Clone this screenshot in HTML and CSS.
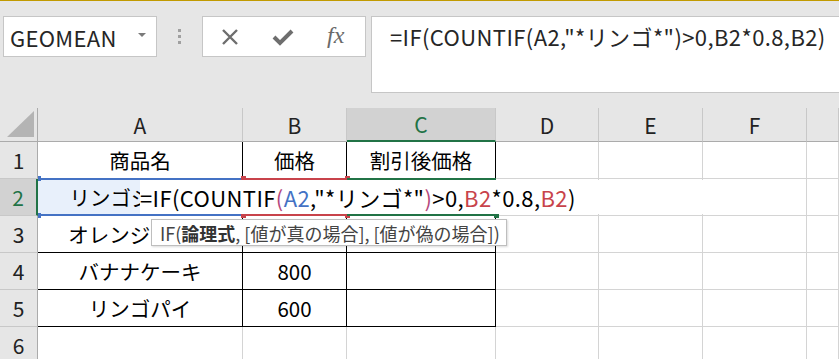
FILE: index.html
```html
<!DOCTYPE html>
<html>
<head>
    <title>Excel - GEOMEAN</title>
    <link rel="stylesheet" href="styles.css">
</head>
<body>
    <div class="topbar">
        <div class="namebox">
            <span>GEOMEAN</span>
            <span class="caret"></span>
        </div>
        <div class="dots"><i></i><i></i><i></i></div>
        <div class="fxbtns">
            <svg class="ico" width="18" height="18" viewBox="0 0 18 18">
                <path d="M2 2 L16 16 M16 2 L2 16" stroke="#6e6e6e" stroke-width="2.4" fill="none"/>
            </svg>
            <svg class="ico" width="22" height="18" viewBox="0 0 22 18">
                <path d="M2 9 L8 15 L20 3" stroke="#6e6e6e" stroke-width="4" fill="none"/>
            </svg>
            <span class="fx">fx</span>
        </div>
        <div class="formula">=IF(COUNTIF(A2,"*リンゴ*")&gt;0,B2*0.8,B2)</div>
    </div>

    <div class="sheet">
        <div class="hd corner"><span class="tri"></span></div>
        <div class="hd">A</div>
        <div class="hd">B</div>
        <div class="hd sel">C</div>
        <div class="hd">D</div>
        <div class="hd">E</div>
        <div class="hd">F</div>
        <div class="hd"></div>

        <div class="rh">1</div>
        <div class="c b">商品名</div>
        <div class="c b">価格</div>
        <div class="c b">割引後価格</div>
        <div class="c"></div><div class="c"></div><div class="c"></div><div class="c"></div>

        <div class="rh sel">2</div>
        <div class="c b a2">リンゴジュース</div>
        <div class="c b">1000</div>
        <div class="c b"></div>
        <div class="c"></div><div class="c"></div><div class="c"></div><div class="c"></div>

        <div class="rh">3</div>
        <div class="c b">オレンジケーキ</div>
        <div class="c b">1200</div>
        <div class="c b"></div>
        <div class="c"></div><div class="c"></div><div class="c"></div><div class="c"></div>

        <div class="rh">4</div>
        <div class="c b">バナナケーキ</div>
        <div class="c b">800</div>
        <div class="c b"></div>
        <div class="c"></div><div class="c"></div><div class="c"></div><div class="c"></div>

        <div class="rh">5</div>
        <div class="c b">リンゴパイ</div>
        <div class="c b">600</div>
        <div class="c b"></div>
        <div class="c"></div><div class="c"></div><div class="c"></div><div class="c"></div>

        <div class="rh">6</div>
        <div class="c"></div><div class="c"></div><div class="c"></div>
        <div class="c"></div><div class="c"></div><div class="c"></div><div class="c"></div>

        <!-- reference ranges while editing C2 -->
        <div class="rng rng-a"><i class="h tl"></i><i class="h bl"></i></div>
        <div class="rng rng-b"><i class="h tl"></i><i class="h bl"></i><i class="h tr"></i><i class="h br"></i></div>
        <div class="rng rng-c"><i class="h br"></i></div>

        <div class="editor">=IF(COUNTIF<span class="pr">(</span><span class="ra">A2</span>,"*リンゴ*"<span class="pr">)</span>&gt;0,<span class="rb">B2</span>*0.8,<span class="rb">B2</span>)</div>

        <div class="tip">IF(<b>論理式</b>, [値が真の場合], [値が偽の場合])</div>
    </div>
</body>
</html>
```

FILE: styles.css
```css
body {
    margin: 0;
    font-family: "Noto Sans CJK JP", "Noto Sans", sans-serif;
    color: #000;
    background: #fff;
    overflow: hidden;
}

.topbar {
    height: 108px;
    box-sizing: border-box;
    border-top: 1px solid #c19a00;
    background: #e6e6e6;
    padding: 15px 0 0 3px;
    display: flex;
    align-items: flex-start;
}
.namebox {
    width: 154px;
    height: 41px;
    box-sizing: border-box;
    background: #fff;
    border: 1px solid #c6c6c6;
    display: flex;
    align-items: center;
    justify-content: space-between;
    padding: 0 10px 0 6px;
    font-size: 22px;
    letter-spacing: 0.3px;
    color: #262626;
}
.caret {
    width: 0;
    height: 0;
    border-left: 4px solid transparent;
    border-right: 4px solid transparent;
    border-top: 4px solid #7a7a7a;
    margin-bottom: 4px;
}
.dots {
    width: 45px;
    display: flex;
    flex-direction: column;
    align-items: center;
    gap: 3px;
    padding-top: 13px;
}
.dots i {
    width: 3px;
    height: 3px;
    background: #a0a0a0;
}
.fxbtns {
    width: 164px;
    height: 41px;
    box-sizing: border-box;
    background: #fff;
    border: 1px solid #c6c6c6;
    display: flex;
    align-items: center;
    gap: 33px;
    padding-left: 18px;
}
.fx {
    font-family: "Liberation Serif", serif;
    font-style: italic;
    font-size: 24px;
    color: #6a6a6a;
    margin-top: -3px;
}
.formula {
    flex: 1;
    margin-left: 5px;
    height: 77px;
    box-sizing: border-box;
    background: #fff;
    border: 1px solid #c6c6c6;
    border-right: none;
    padding: 3px 0 0 18px;
    font-size: 22px;
    letter-spacing: 0.4px;
    color: #262626;
    white-space: nowrap;
}

.sheet {
    position: relative;
    display: grid;
    grid-template-columns: 38px 205px 104px 149px 103px 104px 104px 1fr;
    grid-template-rows: 34px repeat(6, 37px);
}
.hd {
    background: #e6e6e6;
    border-right: 1px solid #c8c8c8;
    border-bottom: 1px solid #ababab;
    display: flex;
    align-items: center;
    justify-content: center;
    font-size: 21px;
    color: #222;
}
.hd.sel {
    background: #d2d2d2;
    border-bottom: 2px solid #217346;
    color: #217346;
}
.corner {
    border-right: 1px solid #ababab;
    position: relative;
}
.tri {
    position: absolute;
    right: 3px;
    bottom: 4px;
    width: 0;
    height: 0;
    border-left: 27px solid transparent;
    border-bottom: 26px solid #b4b4b4;
}
.rh {
    background: #e6e6e6;
    border-right: 1px solid #ababab;
    border-bottom: 1px solid #c8c8c8;
    display: flex;
    align-items: center;
    justify-content: center;
    font-size: 21px;
    color: #222;
}
.rh.sel {
    background: #d2d2d2;
    border-right: 2px solid #217346;
    color: #217346;
}
.c {
    border-right: 1px solid #d4d4d4;
    border-bottom: 1px solid #d4d4d4;
    display: flex;
    align-items: center;
    justify-content: center;
    font-size: 20.5px;
    white-space: nowrap;
    overflow: hidden;
}
.c.b {
    border-right-color: #000;
    border-bottom-color: #000;
}
.a2 {
    background: #e8f0fb;
}

.rng {
    position: absolute;
    top: 70px;
    height: 38px;
    box-sizing: border-box;
    border-top: 2px solid;
    border-bottom: 2px solid;
}
.rng-a { left: 38px; width: 205px; border-color: #4472c4; }
.rng-b { left: 243px; width: 104px; border-color: #c8434b; }
.rng-c { left: 347px; width: 149px; border-color: #217346; }
.h {
    position: absolute;
    width: 5px;
    height: 5px;
    background: currentColor;
}
.rng-a .h { color: #4472c4; width: 3px; }
.rng-b .h { color: #c8434b; }
.rng-c .h { color: #217346; }
.h.tl { left: -2px; top: -4px; }
.h.bl { left: -2px; bottom: -4px; }
.h.tr { right: -3px; top: -4px; }
.h.br { right: -3px; bottom: -4px; }
.rng-a .h.tl, .rng-a .h.bl { left: 0; }

.editor {
    position: absolute;
    left: 140px;
    top: 72px;
    width: 563px;
    height: 34px;
    background: #fff;
    display: flex;
    align-items: center;
    font-size: 22px;
    letter-spacing: 0.4px;
    white-space: nowrap;
}
.pr { color: #b5487d; }
.ra { color: #4472c4; }
.rb { color: #c8434b; }

.tip {
    position: absolute;
    left: 151px;
    top: 111px;
    width: 356px;
    height: 27px;
    box-sizing: border-box;
    background: #fff;
    border: 1px solid #bebebe;
    box-shadow: 1px 1px 2px rgba(0, 0, 0, 0.15);
    padding-left: 8px;
    display: flex;
    align-items: center;
    font-size: 18px;
    color: #444;
    white-space: nowrap;
}
.tip b {
    color: #333;
}
```
